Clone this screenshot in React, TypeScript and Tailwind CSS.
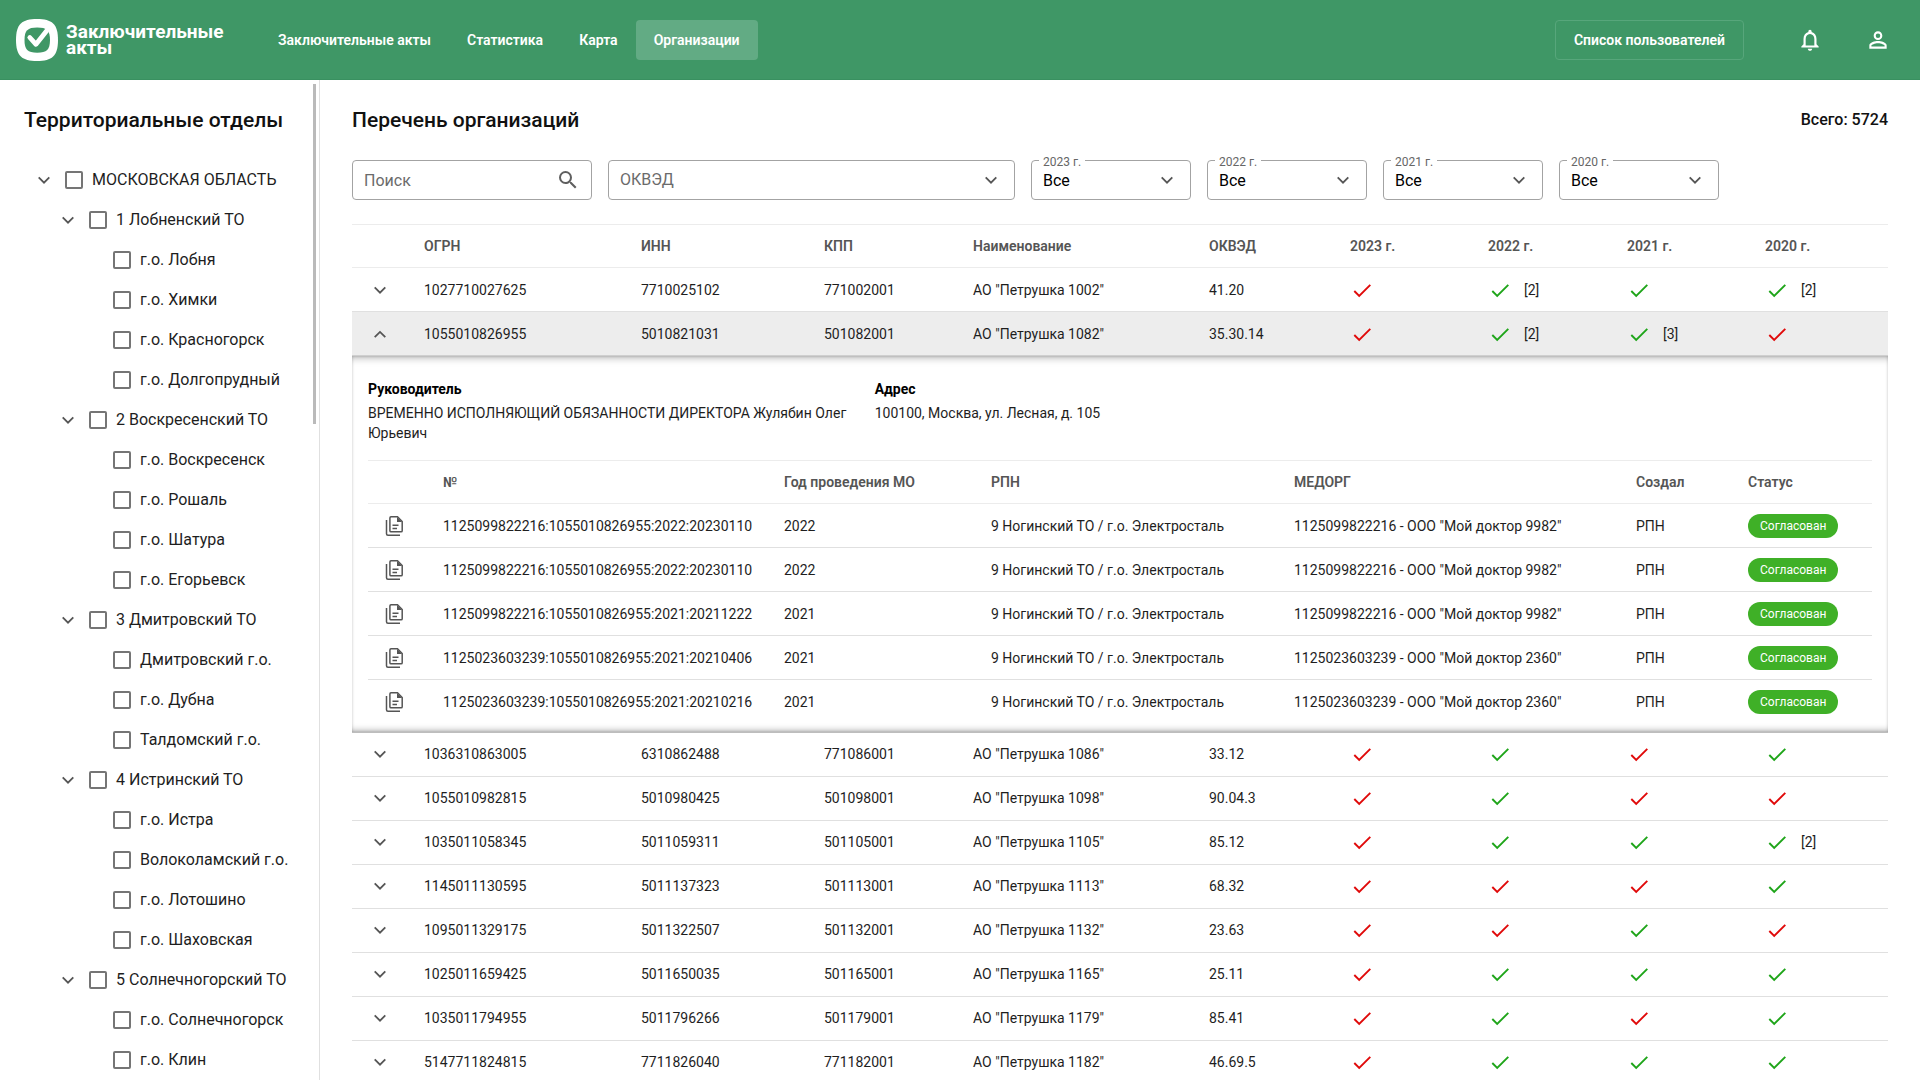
import React from "react";
import { MdNotificationsNone, MdPersonOutline, MdSearch } from "react-icons/md";

type Mark = { ok: boolean; count?: number };

type Organization = {
  ogrn: string;
  inn: string;
  kpp: string;
  name: string;
  okved: string;
  marks: Mark[];
};

const g: Mark = { ok: true };
const r: Mark = { ok: false };
const g2: Mark = { ok: true, count: 2 };
const g3: Mark = { ok: true, count: 3 };

const years = ["2023 г.", "2022 г.", "2021 г.", "2020 г."];

const navItems = ["Заключительные акты", "Статистика", "Карта", "Организации"];

const departments = [
  {
    title: "1 Лобненский ТО",
    items: ["г.о. Лобня", "г.о. Химки", "г.о. Красногорск", "г.о. Долгопрудный"],
  },
  {
    title: "2 Воскресенский ТО",
    items: ["г.о. Воскресенск", "г.о. Рошаль", "г.о. Шатура", "г.о. Егорьевск"],
  },
  {
    title: "3 Дмитровский ТО",
    items: ["Дмитровский г.о.", "г.о. Дубна", "Талдомский г.о."],
  },
  {
    title: "4 Истринский ТО",
    items: ["г.о. Истра", "Волоколамский г.о.", "г.о. Лотошино", "г.о. Шаховская"],
  },
  {
    title: "5 Солнечногорский ТО",
    items: ["г.о. Солнечногорск", "г.о. Клин"],
  },
];

const organizations: Organization[] = [
  { ogrn: "1027710027625", inn: "7710025102", kpp: "771002001", name: 'АО "Петрушка 1002"', okved: "41.20", marks: [r, g2, g, g2] },
  { ogrn: "1055010826955", inn: "5010821031", kpp: "501082001", name: 'АО "Петрушка 1082"', okved: "35.30.14", marks: [r, g2, g3, r] },
  { ogrn: "1036310863005", inn: "6310862488", kpp: "771086001", name: 'АО "Петрушка 1086"', okved: "33.12", marks: [r, g, r, g] },
  { ogrn: "1055010982815", inn: "5010980425", kpp: "501098001", name: 'АО "Петрушка 1098"', okved: "90.04.3", marks: [r, g, r, r] },
  { ogrn: "1035011058345", inn: "5011059311", kpp: "501105001", name: 'АО "Петрушка 1105"', okved: "85.12", marks: [r, g, g, g2] },
  { ogrn: "1145011130595", inn: "5011137323", kpp: "501113001", name: 'АО "Петрушка 1113"', okved: "68.32", marks: [r, r, r, g] },
  { ogrn: "1095011329175", inn: "5011322507", kpp: "501132001", name: 'АО "Петрушка 1132"', okved: "23.63", marks: [r, r, g, r] },
  { ogrn: "1025011659425", inn: "5011650035", kpp: "501165001", name: 'АО "Петрушка 1165"', okved: "25.11", marks: [r, g, g, g] },
  { ogrn: "1035011794955", inn: "5011796266", kpp: "501179001", name: 'АО "Петрушка 1179"', okved: "85.41", marks: [r, g, r, g] },
  { ogrn: "5147711824815", inn: "7711826040", kpp: "771182001", name: 'АО "Петрушка 1182"', okved: "46.69.5", marks: [r, g, g, g] },
];

const acts = [
  { id: "1125099822216:1055010826955:2022:20230110", year: "2022", med: '1125099822216 - ООО "Мой доктор 9982"' },
  { id: "1125099822216:1055010826955:2022:20230110", year: "2022", med: '1125099822216 - ООО "Мой доктор 9982"' },
  { id: "1125099822216:1055010826955:2021:20211222", year: "2021", med: '1125099822216 - ООО "Мой доктор 9982"' },
  { id: "1125023603239:1055010826955:2021:20210406", year: "2021", med: '1125023603239 - ООО "Мой доктор 2360"' },
  { id: "1125023603239:1055010826955:2021:20210216", year: "2021", med: '1125023603239 - ООО "Мой доктор 2360"' },
];

const Chevron: React.FC<{ up?: boolean }> = ({ up }) => (
  <svg viewBox="0 0 24 24" className="size-6 shrink-0" fill="none" stroke="#555" strokeWidth="1.8">
    <path d={up ? "M6.7 15.2 12 9.9l5.3 5.3" : "M6.7 9.4 12 14.7l5.3-5.3"} />
  </svg>
);

const Logo: React.FC = () => (
  <svg viewBox="0 0 42 42" className="size-[42px] shrink-0">
    <path
      fill="#fff"
      d="M21 0C36 0 42 5 42 21s-6 21-21 21S0 37 0 21 6 0 21 0Z"
    />
    <path
      fill="#3f9766"
      d="M21.2 8.5c9.6 0 12.8 3 12.8 12.6s-3.2 12.7-12.8 12.7-12.7-3-12.7-12.7S11.7 8.5 21.2 8.5Z"
    />
    <path
      d="m13.8 18.5 6.2 6.8L30.5 12"
      fill="none"
      stroke="#fff"
      strokeWidth="4.8"
      strokeLinecap="round"
      strokeLinejoin="round"
    />
  </svg>
);

const DocsIcon: React.FC = () => (
  <svg viewBox="0 0 20 20" className="block size-5" fill="none" stroke="#555" strokeWidth="1.5">
    <path d="M2.5 4v13.7q0 1.5 1.5 1.5h12" />
    <path d="M7 .8h6.5l4.7 4.7v9.2q0 1.1-1.1 1.1H7q-1.1 0-1.1-1.1V1.9Q5.9.8 7 .8Z" />
    <path d="M13 1v5h5Z" fill="#555" stroke="none" />
    <path d="M8.5 9.3h6M8.5 12.6h4.5" />
  </svg>
);

const CheckMark: React.FC<{ mark: Mark }> = ({ mark }) => (
  <div className="flex items-center gap-3">
    <svg
      viewBox="0 0 24 24"
      className={mark.ok ? "size-6 text-[#1fa51a]" : "size-6 text-[#e00a0a]"}
      fill="none"
      stroke="currentColor"
      strokeWidth="1.9"
    >
      <path d="m4.3 13 4.9 5L20.3 6.8" />
    </svg>
    {mark.count && <span>[{mark.count}]</span>}
  </div>
);

const TreeRow: React.FC<{ title: string; level: 0 | 1 | 2 }> = ({ title, level }) => {
  const indent = ["pl-8", "pl-14", "pl-20"][level];
  return (
    <li className={`flex h-10 items-center ${indent}`}>
      {level < 2 ? (
        <button type="button" aria-label="Свернуть" className="w-[33px]">
          <Chevron />
        </button>
      ) : (
        <span className="w-[33px]" />
      )}
      <label className="flex items-center gap-[9px] text-base whitespace-nowrap text-[#1e1e1e]">
        <input
          type="checkbox"
          className="size-[18px] appearance-none rounded-[2px] border-2 border-[#757575] checked:bg-[#757575]"
        />
        {title}
      </label>
    </li>
  );
};

const YearSelect: React.FC<{ year: string; id: string }> = ({ year, id }) => (
  <div className="relative flex h-10 w-40 items-center">
    <label htmlFor={id} className="absolute -top-1.5 left-2 bg-white px-1 text-xs text-[#666]">
      {year}
    </label>
    <select
      id={id}
      className="h-10 w-full appearance-none rounded border border-[#a3a3a3] px-[11px] pt-0.5 text-base text-black"
    >
      <option>Все</option>
    </select>
    <span className="pointer-events-none absolute right-3">
      <Chevron />
    </span>
  </div>
);

const Header: React.FC = () => (
  <header className="flex h-20 shrink-0 items-center border-b border-[#399060] bg-[#3f9766] px-4 text-sm font-semibold text-white">
    <a href="#" className="flex w-[244px] items-center gap-2">
      <Logo />
      <span className="text-[19px] leading-4 font-bold">
        Заключительные
        <br />
        акты
      </span>
    </a>
    <nav className="flex">
      {navItems.map((item) => (
        <a
          key={item}
          href="#"
          className={
            item === "Организации"
              ? "flex h-10 items-center rounded bg-[#62ab84] px-[18px]"
              : "flex h-10 items-center rounded px-[18px]"
          }
        >
          {item}
        </a>
      ))}
    </nav>
    <div className="ml-auto flex items-center">
      <button type="button" className="mr-[53px] h-10 rounded border border-[#57a67b] px-[18px]">
        Список пользователей
      </button>
      <button type="button" aria-label="Уведомления" className="mr-[42px]">
        <MdNotificationsNone className="size-[26px]" />
      </button>
      <button type="button" aria-label="Профиль" className="mr-[13px]">
        <MdPersonOutline className="size-[26px]" />
      </button>
    </div>
  </header>
);

const Sidebar: React.FC = () => (
  <aside className="relative w-80 shrink-0 overflow-hidden border-r border-[#e0e0e0] pt-6">
    <h2 className="mb-6 pl-6 text-[21px] leading-8 font-medium text-[#111]">Территориальные отделы</h2>
    <ul>
      <TreeRow title="МОСКОВСКАЯ ОБЛАСТЬ" level={0} />
      {departments.map((dep) => (
        <React.Fragment key={dep.title}>
          <TreeRow title={dep.title} level={1} />
          {dep.items.map((item) => (
            <TreeRow key={item} title={item} level={2} />
          ))}
        </React.Fragment>
      ))}
    </ul>
    {/* Ползунок прокрутки */}
    <div className="absolute top-1 right-[3px] h-[340px] w-[3px] bg-[#bababa]" />
  </aside>
);

const Filters: React.FC = () => (
  <div className="flex gap-4">
    <div className="relative flex h-10 w-60 items-center">
      <input
        type="text"
        aria-label="Поиск"
        placeholder="Поиск"
        className="h-10 w-full rounded border border-[#a3a3a3] pr-10 pl-[11px] text-base placeholder:text-[#6b6b6b]"
      />
      <MdSearch className="pointer-events-none absolute right-3 size-6 text-[#5f5f5f]" />
    </div>
    <div className="relative flex h-10 max-w-[407px] flex-1 items-center">
      <select
        aria-label="ОКВЭД"
        className="h-10 w-full appearance-none rounded border border-[#a3a3a3] px-[11px] text-base text-[#6b6b6b]"
      >
        <option>ОКВЭД</option>
      </select>
      <span className="pointer-events-none absolute right-3">
        <Chevron />
      </span>
    </div>
    {years.map((year) => (
      <YearSelect key={year} year={year} id={`year-${year.slice(0, 4)}`} />
    ))}
  </div>
);

const Details: React.FC = () => (
  <div className="px-4 pt-[23px] pb-2 shadow-[inset_0_8px_8px_-7px_rgba(0,0,0,0.35),inset_0_-7px_7px_-6px_rgba(0,0,0,0.35),inset_0_0_3px_rgba(0,0,0,0.2)]">
    <dl className="mb-[17px] grid grid-cols-3 gap-4 leading-5">
      <div>
        <dt className="mb-1 font-bold text-black">Руководитель</dt>
        <dd>ВРЕМЕННО ИСПОЛНЯЮЩИЙ ОБЯЗАННОСТИ ДИРЕКТОРА Жулябин Олег Юрьевич</dd>
      </div>
      <div>
        <dt className="mb-1 font-bold text-black">Адрес</dt>
        <dd>100100, Москва, ул. Лесная, д. 105</dd>
      </div>
    </dl>
    <table className="w-full table-fixed text-left">
      <colgroup>
        <col className="w-[59px]" />
        <col className="w-[341px]" />
        <col className="w-[207px]" />
        <col className="w-[303px]" />
        <col />
        <col className="w-[112px]" />
        <col className="w-[140px]" />
      </colgroup>
      <thead>
        <tr className="h-[43px] border-y border-[#ececec] text-[#555]">
          <th aria-label="Документ" />
          <th className="px-4 font-semibold">№</th>
          <th className="px-4 font-semibold">Год проведения МО</th>
          <th className="px-4 font-semibold">РПН</th>
          <th className="px-4 font-semibold">МЕДОРГ</th>
          <th className="px-4 font-semibold">Создал</th>
          <th className="px-4 font-semibold">Статус</th>
        </tr>
      </thead>
      <tbody>
        {acts.map((act, i) => (
          <tr key={i} className="h-11 border-b border-[#e0e0e0] last:border-0">
            <td className="px-4">
              <DocsIcon />
            </td>
            <td className="px-4">{act.id}</td>
            <td className="px-4">{act.year}</td>
            <td className="px-4">9 Ногинский ТО / г.о. Электросталь</td>
            <td className="px-4">{act.med}</td>
            <td className="px-4">РПН</td>
            <td className="px-4">
              <span className="inline-flex h-6 items-center rounded-full bg-[#3fb027] px-3 text-xs text-white">
                Согласован
              </span>
            </td>
          </tr>
        ))}
      </tbody>
    </table>
  </div>
);

const OrganizationsTable: React.FC = () => (
  <table className="mt-6 w-full table-fixed text-left text-sm text-[#1e1e1e]">
    <colgroup>
      <col className="w-14" />
      <col className="w-[217px]" />
      <col className="w-[183px]" />
      <col className="w-[149px]" />
      <col />
      <col className="w-[141px]" />
      <col className="w-[138px]" />
      <col className="w-[139px]" />
      <col className="w-[138px]" />
      <col className="w-[139px]" />
    </colgroup>
    <thead>
      <tr className="h-[43px] border-y border-[#ececec] text-[#555]">
        <th aria-label="Подробнее" />
        <th className="px-4 font-semibold">ОГРН</th>
        <th className="px-4 font-semibold">ИНН</th>
        <th className="px-4 font-semibold">КПП</th>
        <th className="px-4 font-semibold">Наименование</th>
        <th className="px-4 font-semibold">ОКВЭД</th>
        {years.map((year) => (
          <th key={year} className="px-4 font-semibold">{year}</th>
        ))}
      </tr>
    </thead>
    <tbody>
      {organizations.map((org, i) => {
        const open = i === 1;
        return (
          <React.Fragment key={org.ogrn}>
            <tr className={open ? "h-11 border-b border-[#cfcfcf] bg-[#ededed]" : "h-11 border-b border-[#e0e0e0]"}>
              <td className="px-4">
                <button type="button" aria-label={open ? "Свернуть" : "Развернуть"} className="block">
                  <Chevron up={open} />
                </button>
              </td>
              <td className="px-4">{org.ogrn}</td>
              <td className="px-4">{org.inn}</td>
              <td className="px-4">{org.kpp}</td>
              <td className="px-4">{org.name}</td>
              <td className="px-4">{org.okved}</td>
              {org.marks.map((mark, j) => (
                <td key={j} className="px-4">
                  <CheckMark mark={mark} />
                </td>
              ))}
            </tr>
            {open && (
              <tr className="border-b border-[#bdbdbd]">
                <td colSpan={10}>
                  <Details />
                </td>
              </tr>
            )}
          </React.Fragment>
        );
      })}
    </tbody>
  </table>
);

const App: React.FC = () => (
  <div className="flex h-screen flex-col overflow-hidden bg-white font-['Roboto',sans-serif]">
    <Header />
    <div className="flex min-h-0 flex-1">
      <Sidebar />
      <main className="min-w-0 flex-1 overflow-hidden px-8 pt-6">
        <div className="mb-6 flex items-center justify-between">
          <h1 className="text-[21px] leading-8 font-medium text-[#111]">Перечень организаций</h1>
          <p className="text-base font-medium text-[#111]">Всего: 5724</p>
        </div>
        <Filters />
        <OrganizationsTable />
      </main>
    </div>
  </div>
);

export default App;
